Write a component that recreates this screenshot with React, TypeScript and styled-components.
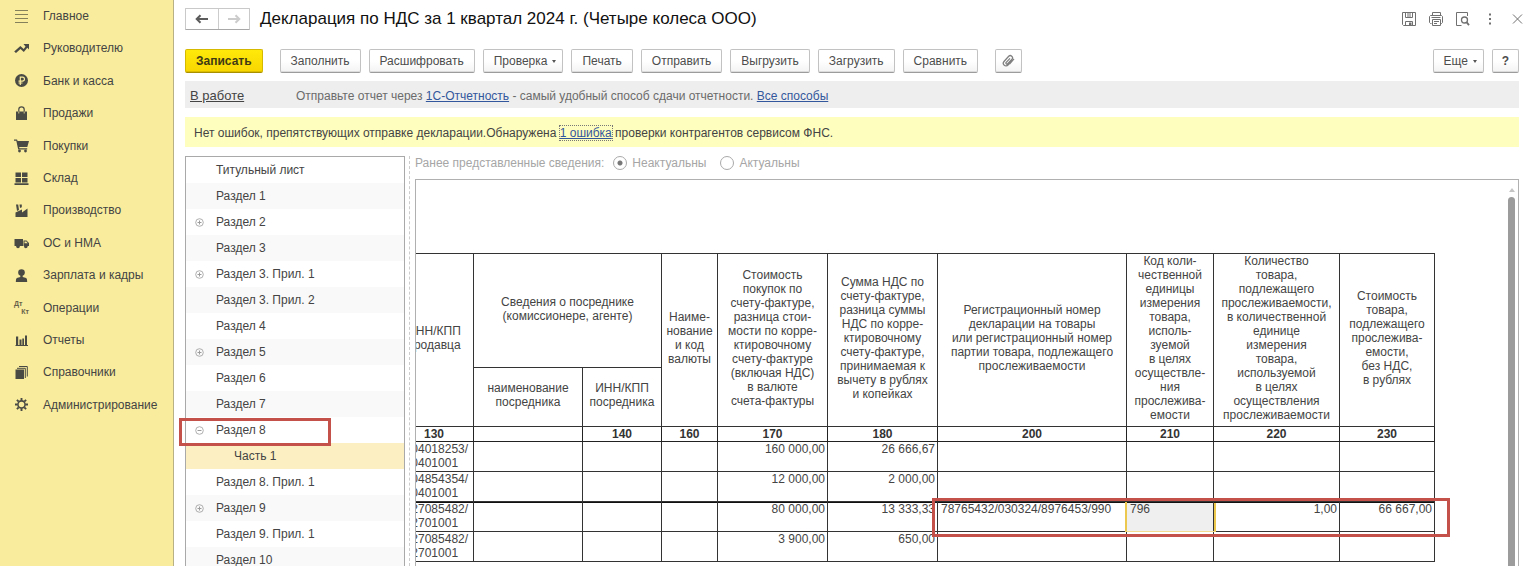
import React from "react";
import styled, { createGlobalStyle, css } from "styled-components";

const Global = createGlobalStyle`
  * { box-sizing: border-box; }
  body {
    margin: 0;
    background: #fff;
    color: #444;
    font-family: "Liberation Sans", Arial, sans-serif;
    font-size: 12px;
    line-height: 14px;
  }
  button, input { font: inherit; }
`;

const Shell = styled.div`
  display: flex;
  height: 100vh;
  overflow: hidden;
`;

/* ---------- navigation ---------- */

const Sidebar = styled.nav`
  flex: none;
  width: 174px;
  background: #f9ec9c;
  border-right: 1px solid #b9b186;
`;

const NavItem = styled.a`
  display: flex;
  align-items: center;
  gap: 14px;
  height: 32px;
  padding-left: 14px;
  color: #444;
  text-decoration: none;
  &:nth-child(5n), &:nth-child(5n + 3) { height: 33px; }
  svg { flex: none; }
`;

const DebitCredit = styled.span`
  display: flex;
  flex-direction: column;
  flex: none;
  width: 15px;
  color: #66614a;
  font-size: 7px;
  line-height: 8px;
  font-weight: bold;
  span:last-child { align-self: flex-end; }
`;

const Glyph = ({ children }: { children: React.ReactNode }) => (
  <svg width="15" height="15" viewBox="0 0 15 15" fill="#4a4a45" aria-hidden="true">{children}</svg>
);

const navItems: { label: string; icon: React.ReactNode }[] = [
  { label: "Главное", icon: <Glyph><path fill="none" stroke="#85805c" d="M1 1.500h13M1 5.500h13M1 9.500h13M1 13.500h13" /></Glyph> },
  { label: "Руководителю", icon: <Glyph><path d="M9.500 3H15v5.500l-1.700-1.700L9.800 11 6.500 8 2 12 .200 10.600 6.400 5l3.300 3 1.800-2.500z" /></Glyph> },
  {
    label: "Банк и касса",
    icon: <Glyph><circle cx="7.500" cy="7.500" r="6.500" /><path fill="none" stroke="#f9ec9c" strokeWidth="1.200" d="M6.300 12V4.200h2.200a1.900 1.900 0 0 1 0 3.900H4.500M4.500 10h4" /></Glyph>,
  },
  {
    label: "Продажи",
    icon: <Glyph><path d="M2 5.500h11V14H2z" /><path fill="none" stroke="#4a4a45" strokeWidth="1.200" d="M4.800 6V3.500a2.700 2.700 0 0 1 5.400 0V6" /><path fill="none" stroke="#f9ec9c" strokeWidth=".800" d="M4.800 5.500v2M10.200 5.500v2" /></Glyph>,
  },
  {
    label: "Покупки",
    icon: <Glyph><path d="M0 1.500h3l.600 1.500H15l-1.700 6H5.200l.2 1.200h7.800v1.300H4.200L2.300 2.800H0z" /><circle cx="5.500" cy="13" r="1.400" /><circle cx="11.500" cy="13" r="1.400" /></Glyph>,
  },
  { label: "Склад", icon: <Glyph><path d="M1.500 1.500h5.500v4.500H1.500zM8 1.500h5.500v4.500H8zM1.500 7h5.500v4.500H1.500zM8 7h5.500v4.500H8zM.500 12.300h14v1.700H.500z" /></Glyph> },
  { label: "Производство", icon: <Glyph><path d="M1.500 14V9.500L8 6.500v3l5.500-4V14zM2 1.500h2.200L5 7 3 8zM5.500 1.500h2.300v2.700l-1.800.800z" /></Glyph> },
  {
    label: "ОС и НМА",
    icon: <Glyph><path d="M.500 4H9v7H.500zM9.500 5.500h3L15 8v3H9.500z" /><path fill="#f9ec9c" d="M10.500 6.500h1.800l1.400 1.700h-3.200z" /><circle cx="4" cy="11.500" r="1.800" /><circle cx="11.800" cy="11.500" r="1.800" /></Glyph>,
  },
  { label: "Зарплата и кадры", icon: <Glyph><circle cx="7.500" cy="4.500" r="3.300" /><path d="M6.300 7h2.400v2l3.500 1q1 .400 1 4H1.800q0-3.600 1-4l3.500-1z" /></Glyph> },
  { label: "Операции", icon: <DebitCredit aria-hidden="true"><span>Дт</span><span>Кт</span></DebitCredit> },
  { label: "Отчеты", icon: <Glyph><path d="M2 3.500h2.200V12H2zM5.500 6.500h2V12h-2zM8.300 5.500h1.700V12H8.300zM11 2.500h2V12h-2zM1.500 12h12.500v1H1.500z" /></Glyph> },
  { label: "Справочники", icon: <Glyph><path d="M1.500 4.500h8.500V14H1.500z" /><path fill="none" stroke="#4a4a45" d="M3 3.300h8.300V13M5 1.500h8.300v10" /></Glyph> },
  {
    label: "Администрирование",
    icon: (
      <Glyph>
        <circle cx="7.500" cy="7.500" r="3.600" fill="none" stroke="#4a4a45" strokeWidth="1.600" />
        <path fill="none" stroke="#4a4a45" strokeWidth="1.900" d="M7.500 1v2.500M7.500 11.500V14M1 7.500h2.500M11.500 7.500H14M2.900 2.900l1.800 1.800M10.300 10.300l1.800 1.800M12.100 2.900l-1.800 1.800M4.700 10.300l-1.800 1.800" />
      </Glyph>
    ),
  },
];

/* ---------- window frame ---------- */

const Main = styled.main`
  display: flex;
  flex-direction: column;
  flex: 1;
  min-width: 0;
  padding: 8px 17px 0 11px;
`;

const TitleBar = styled.header`
  display: flex;
  align-items: center;
  height: 22px;
`;

const History = styled.div`
  display: flex;
  margin-right: 10px;
  border: 1px solid #c9c9c9;
  border-bottom-color: #a8a8a8;
  border-radius: 1px;
`;

const HistoryButton = styled.button`
  display: grid;
  place-items: center;
  width: 32px;
  height: 20px;
  padding: 0;
  border: 0;
  background: #fff;
  color: #5c5c5c;
  & + & { width: 31px; border-left: 1px solid #ccc; }
  &:disabled { color: #ccc; }
`;

const Title = styled.h1`
  flex: 1;
  margin: 0;
  color: #111;
  font-size: 17px;
  line-height: 22px;
  font-weight: normal;
`;

const WindowTools = styled.div`
  display: flex;
  align-items: center;
  gap: 11px;
  margin-right: -6px;
`;

const IconButton = styled.button`
  display: grid;
  place-items: center;
  width: 16px;
  height: 16px;
  padding: 0;
  border: 0;
  background: none;
  color: #707070;
`;

const Toolbar = styled.div`
  display: flex;
  gap: 8px;
  margin-top: 19px;
`;

const Spacer = styled.span<{ $grow?: boolean }>`
  ${(p) => (p.$grow ? css`flex: 1;` : css`width: 1px;`)}
`;

const Button = styled.button<{ $primary?: boolean; $icon?: boolean; $menu?: boolean }>`
  display: flex;
  align-items: center;
  justify-content: center;
  gap: 5px;
  height: 24px;
  padding: 0 ${(p) => (p.$icon ? 0 : p.$menu ? 6 : 10)}px 0 ${(p) => (p.$icon ? 0 : 10)}px;
  ${(p) => p.$icon && css`width: 27px;`}
  border: 1px solid #c2c2c2;
  border-bottom-color: #9c9c9c;
  border-radius: 2px;
  background: linear-gradient(#fff 50%, #f3f3f3);
  box-shadow: inset 0 -1px #dcdcdc;
  color: #4d4d4d;
  white-space: nowrap;
  ${(p) => p.$primary && css`
    border-color: #d5b800;
    border-bottom-color: #a89000;
    background: linear-gradient(#ffe90b, #f8d600);
    box-shadow: inset 0 -1px #dcbd00;
    color: #3f3a14;
    font-weight: bold;
  `}
`;

const Caret = styled.span`
  border: 2px solid transparent;
  border-top: 3px solid #555;
  border-bottom: 0;
`;

const Notice = styled.div`
  display: flex;
  align-items: center;
  height: 27px;
  margin-top: 8px;
  padding: 2px 5px 0;
  background: #eee;
  color: #6b6b6b;
`;

const Status = styled.a`
  width: 106px;
  color: #444;
  font-size: 13px;
`;

const Link = styled.a`
  color: #33579c;
`;

const Check = styled.div`
  height: 30px;
  margin-top: 9px;
  padding: 0 9px;
  background: #fefebf;
  line-height: 32px;
`;

const FocusLink = styled(Link)`
  outline: 1px dotted #777;
`;

/* ---------- sections tree ---------- */

const Body = styled.div`
  display: flex;
  flex: 1;
  min-height: 0;
  margin-top: 9px;
`;

const Tree = styled.ul`
  flex: none;
  width: 220px;
  margin: 0;
  padding: 0;
  border: 1px solid #a9a9a9;
  list-style: none;
`;

const TreeRow = styled.li<{ $selected?: boolean }>`
  position: relative;
  display: flex;
  align-items: center;
  height: 26px;
  padding-left: ${(p) => (p.$selected ? 48 : 9)}px;
  &:nth-child(even) { background: #f9f9f9; }
  ${(p) => p.$selected && css`&&:nth-child(n) { background: #fcf0c2; }`}
`;

const Toggle = styled.button`
  display: grid;
  place-items: center;
  width: 9px;
  height: 9px;
  padding: 0;
  border: 0;
  background: none;
`;

const SectionName = styled.span<{ $indent: number }>`
  margin-left: ${(p) => p.$indent}px;
`;

const Highlight = styled.span`
  position: absolute;
  z-index: 2;
  border: 3px solid #c4514a;
  pointer-events: none;
`;

const TreeHighlight = styled(Highlight)`
  inset: 1px 73px -3px -7px;
`;

const Splitter = styled.div`
  flex: none;
  width: 5px;
  margin-right: 5px;
  border-right: 1px dashed #ccc;
`;

type Section = { name: string; mark?: "plus" | "minus"; selected?: boolean };
const sections: Section[] = [
  { name: "Титульный лист" },
  { name: "Раздел 1" },
  { name: "Раздел 2", mark: "plus" },
  { name: "Раздел 3" },
  { name: "Раздел 3. Прил. 1", mark: "plus" },
  { name: "Раздел 3. Прил. 2" },
  { name: "Раздел 4" },
  { name: "Раздел 5", mark: "plus" },
  { name: "Раздел 6" },
  { name: "Раздел 7" },
  { name: "Раздел 8", mark: "minus" },
  { name: "Часть 1", selected: true },
  { name: "Раздел 8. Прил. 1" },
  { name: "Раздел 9", mark: "plus" },
  { name: "Раздел 9. Прил. 1" },
  { name: "Раздел 10" },
];

/* ---------- report sheet ---------- */

const Report = styled.section`
  display: flex;
  flex-direction: column;
  flex: 1;
  min-width: 0;
`;

const Relevance = styled.fieldset`
  display: flex;
  align-items: center;
  gap: 9px;
  height: 14px;
  margin: 0 0 9px;
  padding: 0;
  border: 0;
  color: #a6a6a6;
`;

const RadioLabel = styled.label`
  display: flex;
  align-items: center;
  gap: 5px;
  & + & { margin-left: 5px; }
`;

const Radio = styled.input`
  appearance: none;
  width: 14px;
  height: 14px;
  margin: 0;
  border: 1px solid #a9a9a9;
  border-radius: 50%;
  background: #fff;
  &:checked { background: radial-gradient(circle, #777 0 2px, #fff 3px); }
`;

const Sheet = styled.div`
  display: flex;
  flex: 1;
  min-height: 0;
  border: 1px solid #b0b0b0;
  border-bottom: 0;
`;

const Viewport = styled.div`
  flex: 1;
  min-width: 0;
  overflow: hidden;
  padding-top: 73px;
`;

const Scrollbar = styled.div`
  display: flex;
  flex-direction: column;
  align-items: center;
  gap: 5px;
  width: 13px;
  padding-top: 8px;
`;

const ScrollUp = styled.span`
  border: 3px solid transparent;
  border-bottom: 4px solid #c4c4c4;
  border-top: 0;
`;

const Thumb = styled.span`
  flex: 1;
  width: 7px;
  border-radius: 4px 4px 0 0;
  background: #9c9c9c;
`;

const Table = styled.table`
  width: 1040px;
  margin-left: -22px;
  border-collapse: collapse;
  table-layout: fixed;
`;

const Head = styled.th<{ $h?: number }>`
  height: ${(p) => (p.$h ? `${p.$h}px` : "auto")};
  padding: 0 0 4px;
  border: 1px solid #333;
  font-weight: normal;
  white-space: nowrap;
`;

const Code = styled.th`
  height: 15px;
  padding: 0;
  border: 1px solid #222;
  color: #333;
`;

const Cell = styled.td<{ $align?: "left" | "right"; $active?: boolean }>`
  position: relative;
  height: 30px;
  padding: 0 2px 0 3px;
  border: 1px solid #333;
  background: ${(p) => (p.$active ? "#efefef" : "none")};
  text-align: ${(p) => p.$align ?? "right"};
  vertical-align: top;
  white-space: nowrap;
`;

const DataRow = styled.tr<{ $heavy?: boolean }>`
  ${(p) => p.$heavy && css`${Cell} { box-shadow: inset 0 1px #111; }`}
`;

const CellCursor = styled.span`
  position: absolute;
  inset: 0 -3px -1px -2px;
  border: 2px solid #ecc84f;
  border-top: 0;
  border-bottom: 1px solid #f3dc92;
`;

const RowHighlight = styled(Highlight)`
  top: -4px;
  left: -6px;
  width: 518px;
  height: 39px;
`;

const columnWidths = [79, 109, 79, 56, 110, 110, 189, 87, 126, 95];
const codes = ["130", "", "140", "160", "170", "180", "200", "210", "220", "230"];

const rows = [
  { inn: ["7704018253/", "770401001"], cost: "160 000,00", vat: "26 666,67" },
  { inn: ["7704854354/", "770401001"], cost: "12 000,00", vat: "2 000,00" },
  {
    inn: ["7727085482/", "772701001"], cost: "80 000,00", vat: "13 333,33",
    trace: { decl: "78765432/030324/8976453/990", unit: "796", qty: "1,00", sum: "66 667,00" },
  },
  { inn: ["7727085482/", "772701001"], cost: "3 900,00", vat: "650,00" },
];

const Lines = ({ text }: { text: string }) => (
  <>
    {text.split("|").map((line, i) => (
      <React.Fragment key={i}>
        {i > 0 && <br />}
        {line}
      </React.Fragment>
    ))}
  </>
);

const ToggleMark = ({ mark }: { mark: "plus" | "minus" }) => (
  <svg width="9" height="9" viewBox="0 0 9 9" fill="none" stroke="#9c9c9c" aria-hidden="true">
    <circle cx="4.500" cy="4.500" r="3.800" strokeWidth=".800" />
    <path d={mark === "plus" ? "M2.500 4.500h4M4.500 2.500v4" : "M2.500 4.500h4"} />
  </svg>
);

const Arrow = ({ flip }: { flip?: boolean }) => (
  <svg width="14" height="10" viewBox="0 0 14 10" fill="none" stroke="currentColor" strokeWidth="2" aria-hidden="true">
    <path d={flip ? "M1 5h11M8.500 1.200L12.300 5 8.500 8.800" : "M13 5H2M5.500 1.200L1.700 5l3.800 3.800"} />
  </svg>
);

const ToolIcon = ({ children }: { children: React.ReactNode }) => (
  <svg width="16" height="16" viewBox="0 0 16 16" fill="none" stroke="currentColor" aria-hidden="true">{children}</svg>
);

export default function App() {
  return (
    <>
      <Global />
      <Shell>
        <Sidebar>
          {navItems.map((item) => (
            <NavItem key={item.label} href="#">
              {item.icon}
              {item.label}
            </NavItem>
          ))}
        </Sidebar>
        <Main>
          <TitleBar>
            <History>
              <HistoryButton aria-label="Назад"><Arrow /></HistoryButton>
              <HistoryButton aria-label="Вперед" disabled><Arrow flip /></HistoryButton>
            </History>
            <Title>Декларация по НДС за 1 квартал 2024 г. (Четыре колеса ООО)</Title>
            <WindowTools>
              <IconButton aria-label="Сохранить">
                <ToolIcon>
                  <path d="M1.500 1.500h13v13h-12l-1-1zM4.500 1.500v5h7v-5M6 3h4M6 5h4M4.500 14.500v-4h7v4" />
                  <path fill="currentColor" stroke="none" d="M8 11.500h2.500v3H8z" />
                </ToolIcon>
              </IconButton>
              <IconButton aria-label="Печать">
                <ToolIcon>
                  <path d="M4.500 4.500v-3h8v3M3.500 12.500h-1l-1-1v-6l1-1h11l1 1v6l-1 1h-1M4.500 8.500h8v6h-8zM6 10.500h5M6 12.500h3M3.500 6.500h9" />
                </ToolIcon>
              </IconButton>
              <IconButton aria-label="Просмотр">
                <ToolIcon>
                  <path d="M6.500 14.500h-5v-13h11v3.500" />
                  <circle cx="9.500" cy="9" r="3" strokeWidth="1.300" />
                  <path strokeWidth="1.800" d="M11.500 11.200l2.500 3" />
                </ToolIcon>
              </IconButton>
              <IconButton aria-label="Меню">
                <ToolIcon><path strokeWidth="2" d="M8 2.500v2M8 7v2M8 11.500v2" /></ToolIcon>
              </IconButton>
              <IconButton aria-label="Закрыть">
                <ToolIcon><path d="M4 3.500l9 9M13 3.500l-9 9" /></ToolIcon>
              </IconButton>
            </WindowTools>
          </TitleBar>

          <Toolbar>
            <Button $primary>Записать</Button>
            <Spacer />
            <Button>Заполнить</Button>
            <Button>Расшифровать</Button>
            <Button $menu>Проверка<Caret /></Button>
            <Button>Печать</Button>
            <Button>Отправить</Button>
            <Button>Выгрузить</Button>
            <Button>Загрузить</Button>
            <Button>Сравнить</Button>
            <Spacer />
            <Button $icon aria-label="Файлы">
              <svg width="13" height="14" viewBox="0 0 13 14" fill="none" stroke="#808080" strokeWidth="1.300" aria-hidden="true">
                <path d="M10.500 6L6 11a2.600 2.600 0 0 1-4-3.500L6.700 2.300a2.200 2.200 0 0 1 3.300 2.900L5.700 9.800A1 1 0 0 1 4.200 8.400l3.800-4M12 4.800l-4.500 5.400" />
              </svg>
            </Button>
            <Spacer $grow />
            <Button $menu>Еще<Caret /></Button>
            <Button $icon aria-label="Справка"><b>?</b></Button>
          </Toolbar>

          <Notice>
            <Status href="#">В работе</Status>
            <span>
              Отправьте отчет через <Link href="#">1С-Отчетность</Link> - самый удобный способ сдачи отчетности.{" "}
              <Link href="#">Все способы</Link>
            </span>
          </Notice>
          <Check>
            Нет ошибок, препятствующих отправке декларации.Обнаружена <FocusLink href="#">1 ошибка</FocusLink> проверки
            контрагентов сервисом ФНС.
          </Check>

          <Body>
            <Tree>
              {sections.map((s) => (
                <TreeRow key={s.name} $selected={s.selected}>
                  {s.mark && <Toggle aria-label={s.name}><ToggleMark mark={s.mark} /></Toggle>}
                  <SectionName $indent={s.selected ? 0 : s.mark ? 12 : 21}>{s.name}</SectionName>
                  {s.mark === "minus" && <TreeHighlight />}
                </TreeRow>
              ))}
            </Tree>
            <Splitter />
            <Report>
              <Relevance disabled>
                <span>Ранее представленные сведения:</span>
                <RadioLabel><Radio type="radio" name="relevance" defaultChecked />Неактуальны</RadioLabel>
                <RadioLabel><Radio type="radio" name="relevance" />Актуальны</RadioLabel>
              </Relevance>
              <Sheet>
                <Viewport>
                  <Table>
                    <colgroup>
                      {columnWidths.map((w, i) => <col key={i} width={w} />)}
                    </colgroup>
                    <thead>
                      <tr>
                        <Head rowSpan={2}><Lines text="ИНН/КПП|продавца" /></Head>
                        <Head colSpan={2} $h={114}><Lines text="Сведения о посреднике|(комиссионере, агенте)" /></Head>
                        <Head rowSpan={2}><Lines text="Наиме-|нование|и код|валюты" /></Head>
                        <Head rowSpan={2}><Lines text="Стоимость|покупок по|счету-фактуре,|разница стои-|мости по корре-|ктировочному|счету-фактуре|(включая НДС)|в валюте|счета-фактуры" /></Head>
                        <Head rowSpan={2}><Lines text="Сумма НДС по|счету-фактуре,|разница суммы|НДС по корре-|ктировочному|счету-фактуре,|принимаемая к|вычету в рублях|и копейках" /></Head>
                        <Head rowSpan={2}><Lines text="Регистрационный номер|декларации на товары|или регистрационный номер|партии товара, подлежащего|прослеживаемости" /></Head>
                        <Head rowSpan={2}><Lines text="Код коли-|чественной|единицы|измерения|товара,|исполь-|зуемой|в целях|осуществле-|ния|прослежива-|емости" /></Head>
                        <Head rowSpan={2}><Lines text="Количество|товара,|подлежащего|прослеживаемости,|в количественной|единице|измерения|товара,|используемой|в целях|осуществления|прослеживаемости" /></Head>
                        <Head rowSpan={2}><Lines text="Стоимость|товара,|подлежащего|прослежива-|емости,|без НДС,|в рублях" /></Head>
                      </tr>
                      <tr>
                        <Head $h={59}><Lines text="наименование|посредника" /></Head>
                        <Head><Lines text="ИНН/КПП|посредника" /></Head>
                      </tr>
                      <tr>{codes.map((c, i) => <Code key={i}>{c}</Code>)}</tr>
                    </thead>
                    <tbody>
                      {rows.map((r, i) => (
                        <DataRow key={i} $heavy={!!r.trace}>
                          <Cell $align="left"><Lines text={r.inn.join("|")} /></Cell>
                          <Cell />
                          <Cell />
                          <Cell />
                          <Cell>{r.cost}</Cell>
                          <Cell>{r.vat}</Cell>
                          <Cell $align="left">{r.trace?.decl}{r.trace && <RowHighlight />}</Cell>
                          <Cell $align="left" $active={!!r.trace}>{r.trace?.unit}{r.trace && <CellCursor />}</Cell>
                          <Cell>{r.trace?.qty}</Cell>
                          <Cell>{r.trace?.sum}</Cell>
                        </DataRow>
                      ))}
                    </tbody>
                  </Table>
                </Viewport>
                <Scrollbar>
                  <ScrollUp />
                  <Thumb />
                </Scrollbar>
              </Sheet>
            </Report>
          </Body>
        </Main>
      </Shell>
    </>
  );
}
